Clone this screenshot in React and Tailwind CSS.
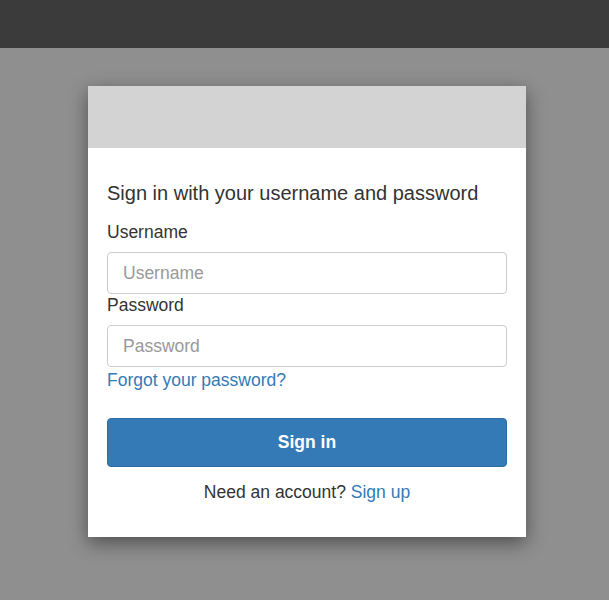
import React from 'react';

/* Sign-in card on a dimmed page */
export default function App() {
    return (
        <div
            className="min-h-[600px] bg-[#8f8f8f] text-[#333333]"
            style={{ fontFamily: "'Liberation Sans', Arial, sans-serif" }}
        >
            <div className="h-12 bg-[#3b3b3b]" />

            <div className="ml-[88px] mt-[38px] w-[438px] bg-white shadow-[0_6px_18px_rgba(0,0,0,0.45)]">
                <div className="h-[62px] bg-[#d3d3d3]" />

                <div className="px-[19px] pt-[33px] pb-[34px]">
                    <h1 className="text-[20px] leading-[24px]">Sign in with your username and password</h1>

                    <label className="block mt-[16px] text-[17.5px] leading-[22px]">Username</label>
                    <input
                        type="text"
                        placeholder="Username"
                        className="mt-[9px] block w-full h-[42px] px-[15px] rounded-[4px] border border-[#cccccc] text-[17.5px] placeholder:text-[#999999] outline-none"
                    />

                    <label className="block text-[17.5px] leading-[22px]">Password</label>
                    <input
                        type="password"
                        placeholder="Password"
                        className="mt-[9px] block w-full h-[42px] px-[15px] rounded-[4px] border border-[#cccccc] text-[17.5px] placeholder:text-[#999999] outline-none"
                    />

                    <a href="#" className="block mt-[2px] text-[17.5px] leading-[22px] text-[#337ab7]">
                        Forgot your password?
                    </a>

                    <button className="mt-[27px] w-full h-[49px] rounded-[4px] bg-[#337ab7] border border-[#2e6da4] text-white text-[17.5px] font-bold">
                        Sign in
                    </button>

                    <p className="mt-[14px] text-center text-[17.5px] leading-[22px]">
                        Need an account? <a href="#" className="text-[#337ab7]">Sign up</a>
                    </p>
                </div>
            </div>
        </div>
    );
}
